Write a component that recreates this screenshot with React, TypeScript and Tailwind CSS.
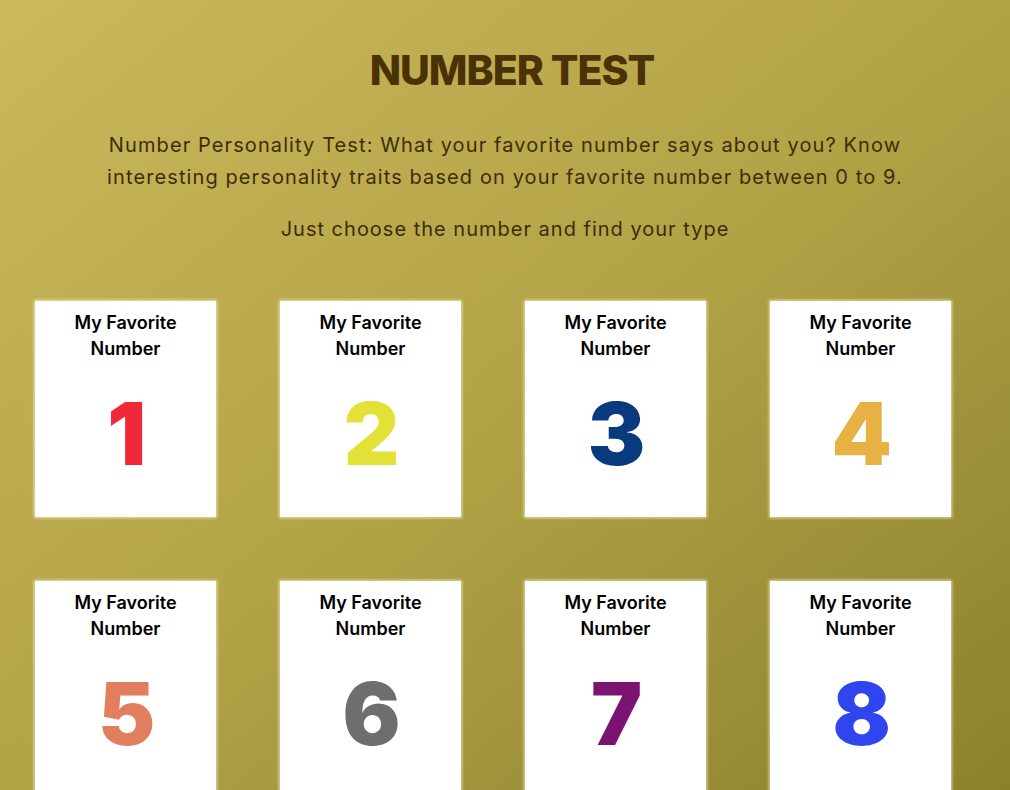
const numbers = [
  { n: "1", color: "text-[#f0283a]" },
  { n: "2", color: "text-[#e3e038]" },
  { n: "3", color: "text-[#0a3a7e]" },
  { n: "4", color: "text-[#e7b243]" },
  { n: "5", color: "text-[#e07e5e]" },
  { n: "6", color: "text-[#6e6e6e]" },
  { n: "7", color: "text-[#7a1470]" },
  { n: "8", color: "text-[#2f45f0]" },
];

function NumberCard({ n, color }: { n: string; color: string }) {
  return (
    <div className="w-[181px] h-[216px] bg-white flex flex-col items-center pt-[9px] shadow-[0_0_3px_1px_rgba(255,248,215,0.7)] cursor-pointer">
      <p className="text-[18px] leading-[26px] font-semibold text-black text-center">
        My Favorite
        <br />
        Number
      </p>
      <span className={`mt-[29px] text-[86px] leading-[86px] font-black tracking-tight ${color}`}>
        {n}
      </span>
    </div>
  );
}

export default function App() {
  return (
    <div className="min-h-[790px] w-full bg-gradient-to-br from-[#cbb95c] via-[#b2a346] to-[#8b812d] font-['Inter','Liberation_Sans',sans-serif] overflow-hidden">
      <div className="pt-[42px] flex flex-col items-center">
        <h1 className="ml-[14px] text-[41px] leading-[56px] font-extrabold text-[#4a3106] tracking-tight">
          NUMBER TEST
        </h1>
        <p className="mt-[31px] w-[860px] text-center text-[20px] leading-[32px] tracking-[1.1px] text-[#3e2c0a]">
          Number Personality Test: What your favorite number says about you? Know
          <br />
          interesting personality traits based on your favorite number between 0 to 9.
        </p>
        <p className="mt-[20px] text-[20px] leading-[32px] tracking-[1px] text-[#3e2c0a]">
          Just choose the number and find your type
        </p>
      </div>
      <div className="mt-[56px] pl-[35px] grid grid-cols-[repeat(4,181px)] gap-[64px]">
        {numbers.map((item) => (
          <NumberCard key={item.n} n={item.n} color={item.color} />
        ))}
      </div>
    </div>
  );
}
